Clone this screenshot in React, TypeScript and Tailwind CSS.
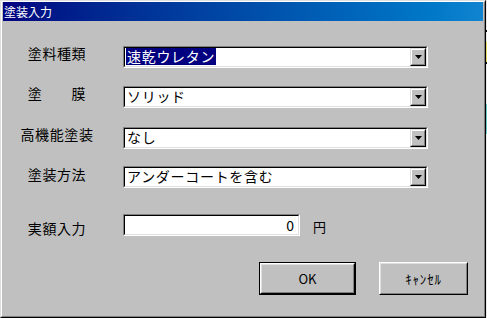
const jp = "font-['Noto_Sans_CJK_JP',sans-serif]";

function DropButton() {
  return (
    <div className="h-[18px] w-[16px] border border-t-[#dfdfdf] border-l-[#dfdfdf] border-r-black border-b-black">
      <div className="flex h-full w-full items-center justify-center border border-t-white border-l-white border-r-[#808080] border-b-[#808080] bg-[#c0c0c0]">
        <svg width="7" height="4" viewBox="0 0 7 4">
          <polygon points="0,0 7,0 3.5,4" fill="black" />
        </svg>
      </div>
    </div>
  );
}

function Sunken({ width, children }: { width: string; children: React.ReactNode }) {
  return (
    <div className={`h-[22px] ${width} border border-t-[#808080] border-l-[#808080] border-r-white border-b-white`}>
      <div className="flex h-full border border-t-black border-l-black border-r-[#dfdfdf] border-b-[#dfdfdf] bg-white">
        {children}
      </div>
    </div>
  );
}

function Combo({ value, selected }: { value: string; selected?: boolean }) {
  return (
    <Sunken width="w-[305px]">
      <div className="flex flex-1 items-start pl-px">
        <span
          className={`block h-[17px] px-px text-[14px] leading-[17px] tracking-[0.7px] ${
            selected ? "bg-[#000080] text-white" : "text-black"
          }`}
        >
          {value}
        </span>
      </div>
      <DropButton />
    </Sunken>
  );
}

function Label({ text, offset }: { text: string; offset: string }) {
  return (
    <div className={`ml-[11px] mr-[23px] w-[86px] text-center text-[14px] leading-[14px] tracking-[0.6px] text-black ${offset}`}>
      {text}
    </div>
  );
}

export default function App() {
  return (
    <div className={`flex h-[318px] w-[487px] ${jp}`}>
      <div className="h-[318px] w-[486px] border border-t-[#dfdfdf] border-l-[#dfdfdf] border-r-black border-b-black">
        <div className="flex h-full flex-col border border-t-white border-l-white border-r-[#808080] border-b-[#808080] bg-[#c0c0c0] px-px">
          <div className="flex h-[19px] items-center bg-gradient-to-r from-[#000080] to-[#1084d0] pl-px text-[12px] leading-none text-white">
            塗装入力
          </div>

          <div className="flex flex-col pt-[25px]">
            <div className="flex items-start">
              <Label text="塗料種類" offset="mt-0" />
              <Combo value="速乾ウレタン" selected />
            </div>
            <div className="mt-[18px] flex items-start">
              <Label text="塗　　膜" offset="mt-0" />
              <Combo value="ソリッド" />
            </div>
            <div className="mt-[19px] flex items-start">
              <Label text="高機能塗装" offset="mt-0" />
              <Combo value="なし" />
            </div>
            <div className="mt-[17px] flex items-start">
              <Label text="塗装方法" offset="mt-px" />
              <Combo value="アンダーコートを含む" />
            </div>
            <div className="mt-[26px] flex items-start">
              <Label text="実額入力" offset="mt-[7px]" />
              <Sunken width="w-[177px]">
                <div className="flex-1 pr-[4px] text-right text-[14px] leading-[18px] text-black">0</div>
              </Sunken>
              <div className="ml-[13px] mt-[6px] text-[13px] leading-[14px] text-black">円</div>
            </div>

            <div className="ml-[256px] mt-[26px] flex">
              <div className="h-[33px] w-[97px] border border-black">
                <div className="h-full border border-t-white border-l-white border-r-black border-b-black">
                  <div className="flex h-full items-center justify-center border border-t-[#dfdfdf] border-l-[#dfdfdf] border-r-[#808080] border-b-[#808080] text-[13px] text-black">
                    OK
                  </div>
                </div>
              </div>
              <div className="ml-[23px] h-[33px] w-[89px] border border-t-white border-l-white border-r-black border-b-black">
                <div className="flex h-full items-center justify-center border border-t-[#dfdfdf] border-l-[#dfdfdf] border-r-[#808080] border-b-[#808080] text-[13px] tracking-[0.8px] text-black">
                  ｷｬﾝｾﾙ
                </div>
              </div>
            </div>
          </div>
        </div>
      </div>
      <div className="flex w-px flex-col bg-[#e8e8e8]">
        <div className="mt-[30px] h-[2px] bg-black" />
        <div className="mt-[10px] h-[20px] bg-[#e8d860]" />
        <div className="h-[2px] bg-black" />
        <div className="mt-[40px] h-[30px] bg-[#6fc8d0]" />
      </div>
    </div>
  );
}
